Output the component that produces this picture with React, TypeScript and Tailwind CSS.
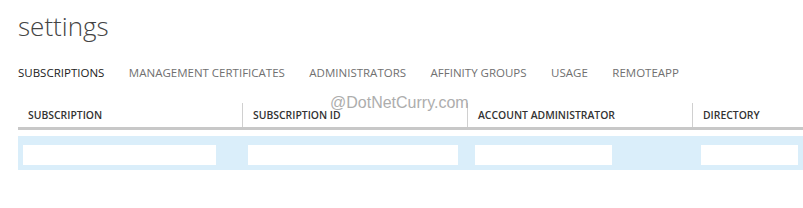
const tabs = [
  "SUBSCRIPTIONS",
  "MANAGEMENT CERTIFICATES",
  "ADMINISTRATORS",
  "AFFINITY GROUPS",
  "USAGE",
  "REMOTEAPP",
];

const columns = [
  { title: "SUBSCRIPTION", box: "ml-[5px] w-[193px]" },
  { title: "SUBSCRIPTION ID", box: "ml-[6px] w-[210px]" },
  { title: "ACCOUNT ADMINISTRATOR", box: "ml-[8px] w-[137px]" },
  { title: "DIRECTORY", box: "ml-[9px] w-[97px]" },
];

export default function App() {
  return (
    <div className="relative w-[803px] h-[208px] overflow-hidden bg-white font-['Open_Sans',sans-serif]">
      <div className="pl-[18px] pt-[9px]">
        <h1 className="text-[26px] leading-[34px] font-light text-[#444]">settings</h1>

        {/* tabs */}
        <div className="mt-[22px] flex gap-[24.5px] text-[11.5px] leading-[16px] text-[#707070]">
          {tabs.map((t, i) => (
            <span key={t} className={i === 0 ? "text-[#222]" : ""}>
              {t}
            </span>
          ))}
        </div>

        {/* table */}
        <div className="mt-[22px] overflow-hidden">
          <div className="w-[900px]">
            <div className="grid grid-cols-[224px_225px_225px_226px] h-[24px] border-b-[3px] border-[#c8c8c8] box-content">
              {columns.map((c, i) => (
                <div
                  key={c.title}
                  className={
                    "flex items-end pb-[5px] text-[10.4px] leading-[14px] font-semibold text-[#333] " +
                    (i === 0 ? "pl-[10px]" : "pl-[10px] border-l border-[#d0d0d0]")
                  }
                >
                  {c.title}
                </div>
              ))}
            </div>
            <div className="mt-[6px] h-[34px] bg-[#daeefa] grid grid-cols-[224px_225px_225px_226px] pt-[9px]">
              {columns.map((c) => (
                <div key={c.title}>
                  <div className={"h-[20px] bg-white " + c.box} />
                </div>
              ))}
            </div>
          </div>
        </div>
      </div>

      {/* watermark */}
      <div className="absolute left-[330px] top-[93px] text-[16px] leading-[20px] text-[#999] opacity-80 font-['Liberation_Sans',sans-serif]">
        @DotNetCurry.com
      </div>
    </div>
  );
}
